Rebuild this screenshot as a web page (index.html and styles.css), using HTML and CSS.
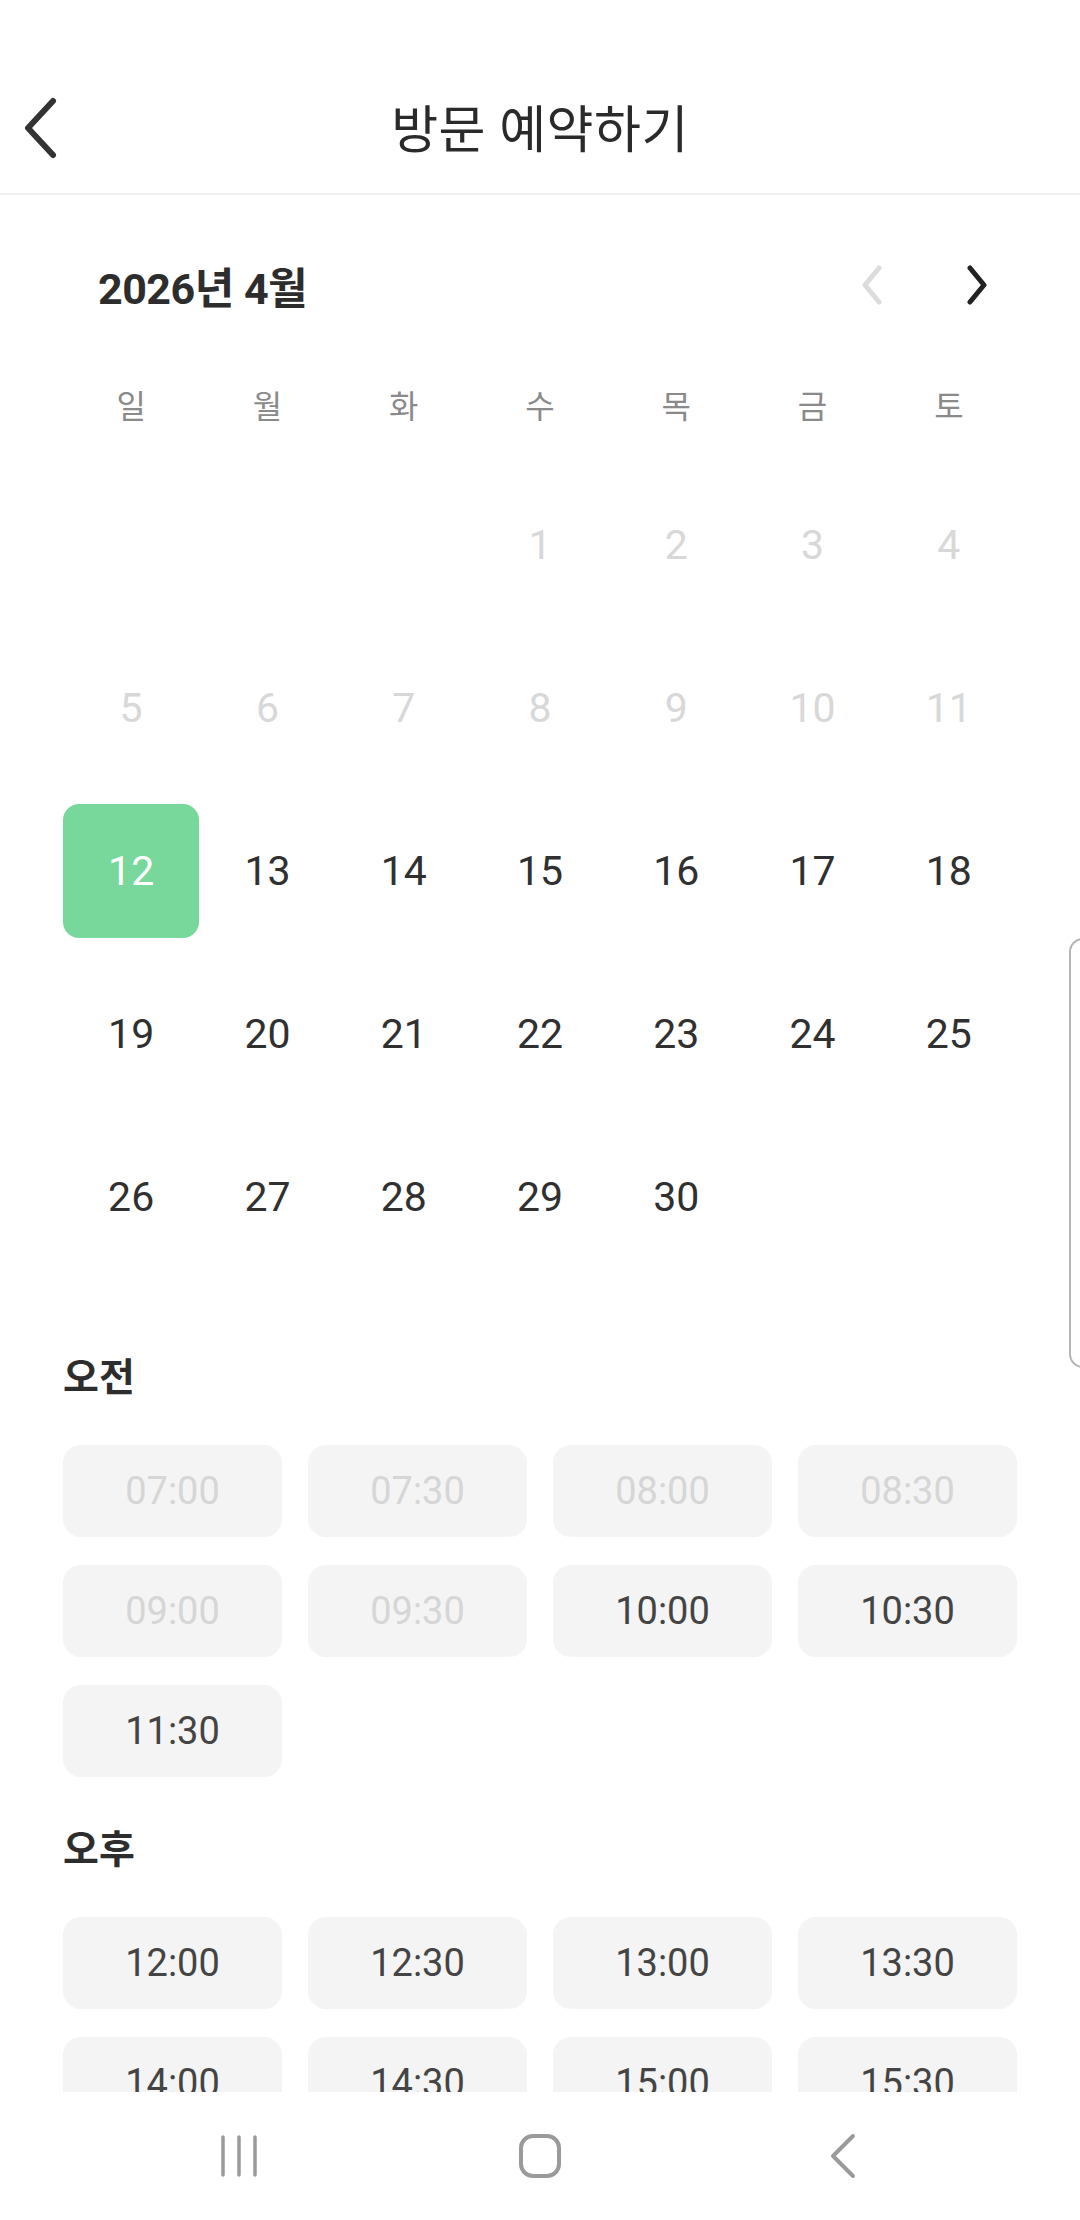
FILE: index.html
```html
<!DOCTYPE html>
<html lang="ko">
<head>
    <meta charset="UTF-8">
    <meta name="viewport" content="width=device-width, initial-scale=1.0">
    <title>방문 예약하기</title>
    <link rel="stylesheet" href="styles.css">
</head>
<body>
    <div class="content">
        <header class="topbar">
            <button class="back-btn" aria-label="뒤로">
                <svg width="40" height="64" viewBox="0 0 40 64">
                    <path d="M33 5 L8 32 L33 59" fill="none" stroke="#333" stroke-width="6" stroke-linecap="round" stroke-linejoin="round"/>
                </svg>
            </button>
            <h1>방문 예약하기</h1>
        </header>

        <section class="calendar">
            <div class="month-bar">
                <span class="month-title">2026년 4월</span>
                <div class="month-nav">
                    <button class="nav-arrow" aria-label="이전 달">
                        <svg width="28" height="40" viewBox="0 0 28 40">
                            <path d="M21 3 L7 20 L21 37" fill="none" stroke="#dcdcdc" stroke-width="5" stroke-linecap="round" stroke-linejoin="round"/>
                        </svg>
                    </button>
                    <button class="nav-arrow" aria-label="다음 달">
                        <svg width="28" height="40" viewBox="0 0 28 40">
                            <path d="M7 3 L21 20 L7 37" fill="none" stroke="#222" stroke-width="5" stroke-linecap="round" stroke-linejoin="round"/>
                        </svg>
                    </button>
                </div>
            </div>

            <div class="weekdays">
                <span>일</span><span>월</span><span>화</span><span>수</span><span>목</span><span>금</span><span>토</span>
            </div>

            <div class="days">
                <span class="day empty"></span>
                <span class="day empty"></span>
                <span class="day empty"></span>
                <span class="day past">1</span>
                <span class="day past">2</span>
                <span class="day past">3</span>
                <span class="day past">4</span>
                <span class="day past">5</span>
                <span class="day past">6</span>
                <span class="day past">7</span>
                <span class="day past">8</span>
                <span class="day past">9</span>
                <span class="day past">10</span>
                <span class="day past">11</span>
                <span class="day selected">12</span>
                <span class="day">13</span>
                <span class="day">14</span>
                <span class="day">15</span>
                <span class="day">16</span>
                <span class="day">17</span>
                <span class="day">18</span>
                <span class="day">19</span>
                <span class="day">20</span>
                <span class="day">21</span>
                <span class="day">22</span>
                <span class="day">23</span>
                <span class="day">24</span>
                <span class="day">25</span>
                <span class="day">26</span>
                <span class="day">27</span>
                <span class="day">28</span>
                <span class="day">29</span>
                <span class="day">30</span>
            </div>
        </section>

        <section class="times">
            <h2 class="period">오전</h2>
            <div class="slots">
                <button class="slot disabled">07:00</button>
                <button class="slot disabled">07:30</button>
                <button class="slot disabled">08:00</button>
                <button class="slot disabled">08:30</button>
                <button class="slot disabled">09:00</button>
                <button class="slot disabled">09:30</button>
                <button class="slot">10:00</button>
                <button class="slot">10:30</button>
                <button class="slot">11:30</button>
            </div>

            <h2 class="period pm">오후</h2>
            <div class="slots">
                <button class="slot">12:00</button>
                <button class="slot">12:30</button>
                <button class="slot">13:00</button>
                <button class="slot">13:30</button>
                <button class="slot">14:00</button>
                <button class="slot">14:30</button>
                <button class="slot">15:00</button>
                <button class="slot">15:30</button>
                <button class="slot">16:00</button>
                <button class="slot">16:30</button>
                <button class="slot">17:00</button>
                <button class="slot">17:30</button>
            </div>
        </section>
    </div>

    <div class="edge-handle"></div>

    <nav class="sysbar">
        <span class="sys-btn">
            <svg width="44" height="44" viewBox="0 0 44 44">
                <path d="M7 3 V41 M23 3 V41 M39 3 V41" fill="none" stroke="#9a9a9a" stroke-width="3.5" stroke-linecap="round"/>
            </svg>
        </span>
        <span class="sys-btn">
            <svg width="46" height="46" viewBox="0 0 46 46">
                <rect x="4" y="3" width="38" height="40" rx="12" fill="none" stroke="#9a9a9a" stroke-width="4"/>
            </svg>
        </span>
        <span class="sys-btn">
            <svg width="32" height="46" viewBox="0 0 32 46">
                <path d="M27 3 L7 23 L27 43" fill="none" stroke="#9a9a9a" stroke-width="4" stroke-linecap="round" stroke-linejoin="round"/>
            </svg>
        </span>
    </nav>
</body>
</html>
```

FILE: styles.css
```css
* {
    box-sizing: border-box;
}

body {
    margin: 0;
    width: 1080px;
    height: 2220px;
    overflow: hidden;
    position: relative;
    display: flex;
    flex-direction: column;
    background-color: #fff;
    font-family: Roboto, 'Noto Sans CJK KR', sans-serif;
    color: #333;
}

button {
    font-family: inherit;
    border: none;
    background: none;
    padding: 0;
}

.content {
    flex: 1;
    overflow: hidden;
}

/* Top bar */
.topbar {
    position: relative;
    height: 195px;
    padding-top: 58px;
    display: flex;
    align-items: center;
    justify-content: center;
    border-bottom: 2px solid #f0f0f0;
}

.back-btn {
    position: absolute;
    left: 20px;
    top: 96px;
    width: 40px;
    height: 64px;
}

.topbar h1 {
    margin: 0;
    font-size: 51px;
    font-weight: 400;
    color: #2a2a2a;
    letter-spacing: 0.5px;
}

/* Calendar */
.calendar {
    padding: 0 63px;
}

.month-bar {
    height: 90px;
    margin-top: 45px;
    display: flex;
    align-items: center;
    justify-content: space-between;
}

.month-title {
    padding-left: 35px;
    font-size: 43px;
    font-weight: 700;
    color: #2d2d2d;
    letter-spacing: -0.5px;
}

.month-nav {
    display: flex;
    gap: 45px;
    margin-right: 10px;
}

.nav-arrow {
    width: 60px;
    height: 60px;
    display: flex;
    align-items: center;
    justify-content: center;
}

.weekdays {
    display: grid;
    grid-template-columns: repeat(7, 1fr);
    height: 80px;
    margin-top: 34px;
    align-items: center;
    text-align: center;
    font-size: 32px;
    color: #8a8a8a;
}

.days {
    display: grid;
    grid-template-columns: repeat(7, 1fr);
    grid-auto-rows: 134px;
    row-gap: 29px;
    margin-top: 34px;
}

.day {
    display: flex;
    align-items: center;
    justify-content: center;
    font-size: 41px;
    color: #303030;
    border-radius: 16px;
}

.day.past {
    color: #d8d8d8;
}

.day.selected {
    background-color: #78d89b;
    color: #fff;
}

/* Time slots */
.times {
    padding: 0 63px;
    margin-top: 89px;
}

.period {
    margin: 0;
    height: 50px;
    line-height: 50px;
    font-size: 39px;
    font-weight: 700;
    color: #2d2d2d;
}

.period.pm {
    margin-top: 48px;
}

.slots {
    display: grid;
    grid-template-columns: repeat(4, 1fr);
    gap: 28px 26px;
    margin-top: 42px;
}

.slot {
    height: 92px;
    border-radius: 18px;
    background-color: #f4f4f4;
    font-size: 38px;
    color: #444;
}

.slot.disabled {
    color: #d6d6d6;
}

/* Edge panel handle */
.edge-handle {
    position: absolute;
    left: 1069px;
    top: 938px;
    width: 30px;
    height: 430px;
    border: 2px solid #b5b5b5;
    border-radius: 14px 0 0 14px;
    background-color: #fff;
}

/* System navigation */
.sysbar {
    height: 128px;
    display: flex;
    justify-content: center;
    align-items: center;
    background-color: #fff;
}

.sys-btn {
    width: 302px;
    display: flex;
    justify-content: center;
}
```
